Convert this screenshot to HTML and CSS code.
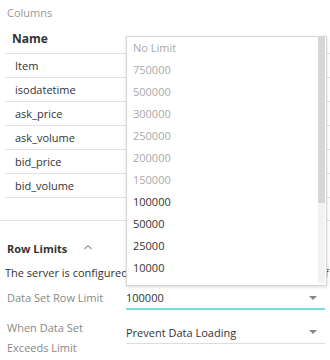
FILE: index.html
```html
<!DOCTYPE html>
<html lang="en">
<head>
    <meta charset="UTF-8">
    <meta name="viewport" content="width=device-width, initial-scale=1.0">
    <title>Data Source Settings</title>
    <link rel="stylesheet" href="styles.css">
</head>
<body>
    <div class="panel">
        <div class="section-label">Columns</div>
        <div class="columns">
            <div class="col-head">Name</div>
            <div class="col-row">Item</div>
            <div class="col-row">isodatetime</div>
            <div class="col-row">ask_price</div>
            <div class="col-row">ask_volume</div>
            <div class="col-row">bid_price</div>
            <div class="col-row">bid_volume</div>
        </div>
        <div class="divider"></div>

        <div class="group-head">
            <span>Row Limits</span>
            <svg class="chevron" width="10" height="6" viewBox="0 0 10 6"><path d="M1.5 5 L5 1.5 L8.5 5" fill="none" stroke="#999" stroke-width="1.2"/></svg>
        </div>
        <div class="note">The server is configured to limit data set rows to a maximum of 1000000.</div>

        <div class="field first">
            <div class="field-label">Data Set Row Limit</div>
            <div class="select active">
                <span>100000</span>
                <span class="caret"></span>
            </div>
        </div>
        <div class="field second">
            <div class="field-label">When Data Set<br>Exceeds Limit</div>
            <div class="select">
                <span>Prevent Data Loading</span>
                <span class="caret"></span>
            </div>
        </div>
    </div>

    <div class="dropdown">
        <ul class="options">
            <li class="disabled">No Limit</li>
            <li class="disabled">750000</li>
            <li class="disabled">500000</li>
            <li class="disabled">300000</li>
            <li class="disabled">250000</li>
            <li class="disabled">200000</li>
            <li class="disabled">150000</li>
            <li>100000</li>
            <li>50000</li>
            <li>25000</li>
            <li>10000</li>
        </ul>
        <div class="scroll-track"><div class="scroll-thumb"></div></div>
    </div>
</body>
</html>
```

FILE: styles.css
```css
body {
    margin: 0;
    font-family: "Open Sans", "Liberation Sans", sans-serif;
    font-size: 11px;
    color: #333;
    background: #fff;
    overflow: hidden;
}

.panel {
    width: 330px;
    overflow: hidden;
}

.section-label {
    color: #999;
    padding: 4px 7px 0;
    height: 18px;
    line-height: 18px;
}

.columns {
    margin: 0 0 0 5px;
    width: 340px;
}

.col-head {
    font-weight: bold;
    font-size: 12px;
    padding-left: 7px;
    height: 31px;
    line-height: 33px;
    border-bottom: 1px solid #e2e2e2;
}

.col-row {
    padding-left: 10px;
    height: 23px;
    line-height: 24px;
    border-bottom: 1px solid #e2e2e2;
}

.divider {
    margin-top: 22px;
    border-bottom: 1px solid #e2e2e2;
}

.group-head {
    display: flex;
    align-items: center;
    gap: 16px;
    font-weight: bold;
    padding: 17px 7px 0;
    height: 21px;
}

.chevron {
    margin-top: -3px;
}

.note {
    padding: 4px 5px 0;
    height: 20px;
    line-height: 20px;
    white-space: nowrap;
    overflow: hidden;
}

.field {
    display: flex;
    align-items: flex-start;
}

.field-label {
    width: 119px;
    padding-left: 7px;
    color: #888;
    line-height: 20px;
}

.first .field-label {
    padding-top: 5px;
}

.select {
    flex: 1;
    margin-right: 5px;
    display: flex;
    justify-content: space-between;
    align-items: center;
    height: 22px;
    padding-top: 4px;
    border-bottom: 1px solid #ddd;
}

.select.active {
    border-bottom: 2px solid #79dcdc;
    height: 21px;
    margin-bottom: 2px;
}

.second .select {
    padding-top: 9px;
    height: 22px;
}

.second .field-label {
    padding-top: 6px;
}

.caret {
    width: 0;
    height: 0;
    margin-right: 8px;
    border-left: 4px solid transparent;
    border-right: 4px solid transparent;
    border-top: 4px solid #888;
}

.dropdown {
    position: absolute;
    left: 126px;
    top: 36px;
    width: 199px;
    height: 248px;
    background: #fff;
    border: 1px solid #d6d6d6;
    box-shadow: 0 1px 3px rgba(0, 0, 0, 0.15);
    display: flex;
}

.options {
    list-style: none;
    margin: 0;
    padding: 0;
    flex: 1;
}

.options li {
    height: 22px;
    line-height: 22px;
    padding-left: 6px;
    color: #333;
}

.options li.disabled {
    color: #aaa;
}

.scroll-track {
    width: 7px;
    background: #f2f2f2;
    margin: 0 1px 2px 0;
}

.scroll-thumb {
    height: 166px;
    background: #d6d6d6;
}
```
